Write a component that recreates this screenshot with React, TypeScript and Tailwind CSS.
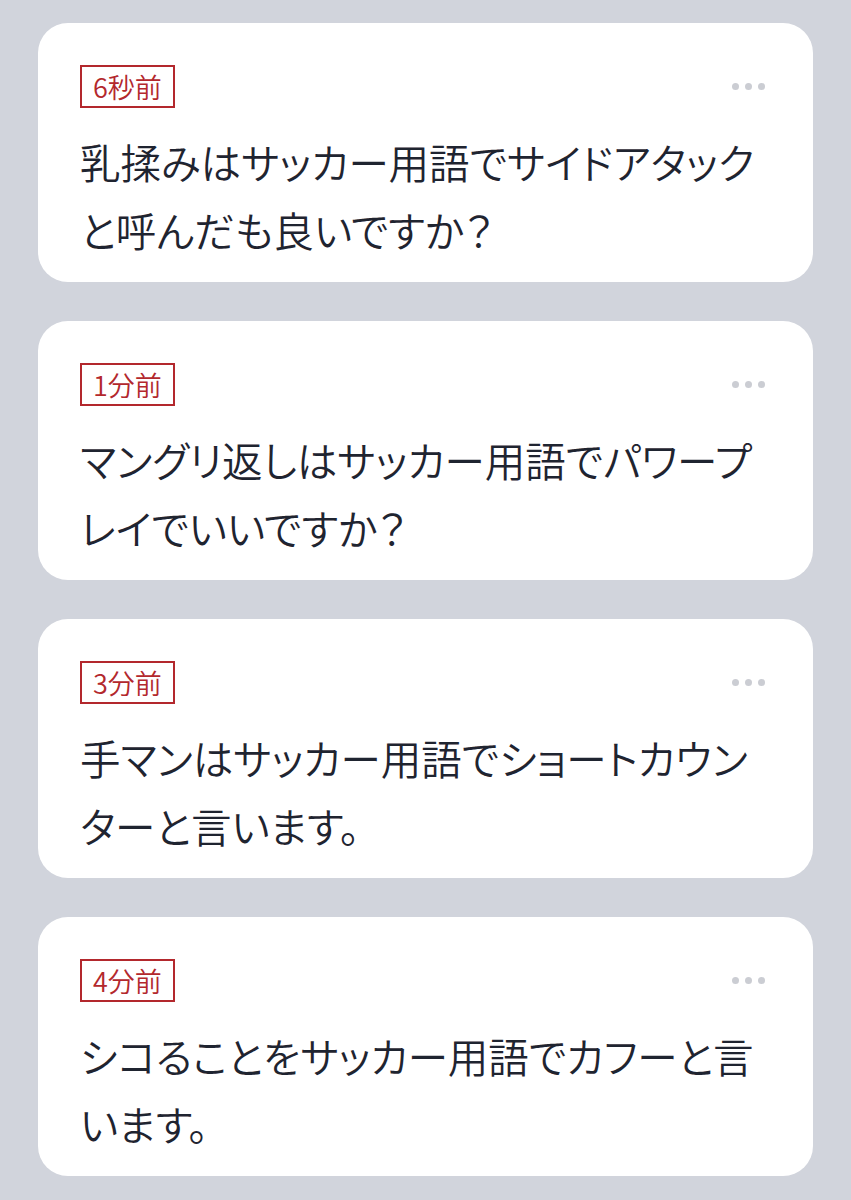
const posts = [
  { time: "6秒前", body: "乳揉みはサッカー用語でサイドアタックと呼んだも良いですか？" },
  { time: "1分前", body: "マングリ返しはサッカー用語でパワープレイでいいですか？" },
  { time: "3分前", body: "手マンはサッカー用語でショートカウンターと言います。" },
  { time: "4分前", body: "シコることをサッカー用語でカフーと言います。" },
];

function PostCard({ time, body }: { time: string; body: string }) {
  return (
    <div className="bg-white rounded-[30px] pl-[42px] pr-[40px] pt-[42px] pb-[18px]">
      <div className="flex items-center justify-between">
        <span className="border-2 border-[#b3282d] text-[#b3282d] text-[27px] leading-[39px] px-[11px] font-[350]">
          {time}
        </span>
        {/* more menu */}
        <div className="flex items-center gap-[6px] mr-[8px]">
          <span className="w-[7px] h-[7px] rounded-full bg-[#cbcdd3]"></span>
          <span className="w-[7px] h-[7px] rounded-full bg-[#cbcdd3]"></span>
          <span className="w-[7px] h-[7px] rounded-full bg-[#cbcdd3]"></span>
        </div>
      </div>
      <p className="mt-[20px] text-[40.5px] leading-[68px] text-[#1f2430] font-[350] [font-feature-settings:'palt']">
        {body}
      </p>
    </div>
  );
}

export default function App() {
  return (
    <div
      className="min-h-[1200px] bg-[#d1d4dc] px-[38px] pt-[23px] pb-[24px] flex flex-col gap-[39px]"
      style={{ fontFamily: '"Noto Sans CJK JP", "Noto Sans", sans-serif' }}
    >
      {posts.map((p) => (
        <PostCard key={p.time} time={p.time} body={p.body} />
      ))}
    </div>
  );
}
